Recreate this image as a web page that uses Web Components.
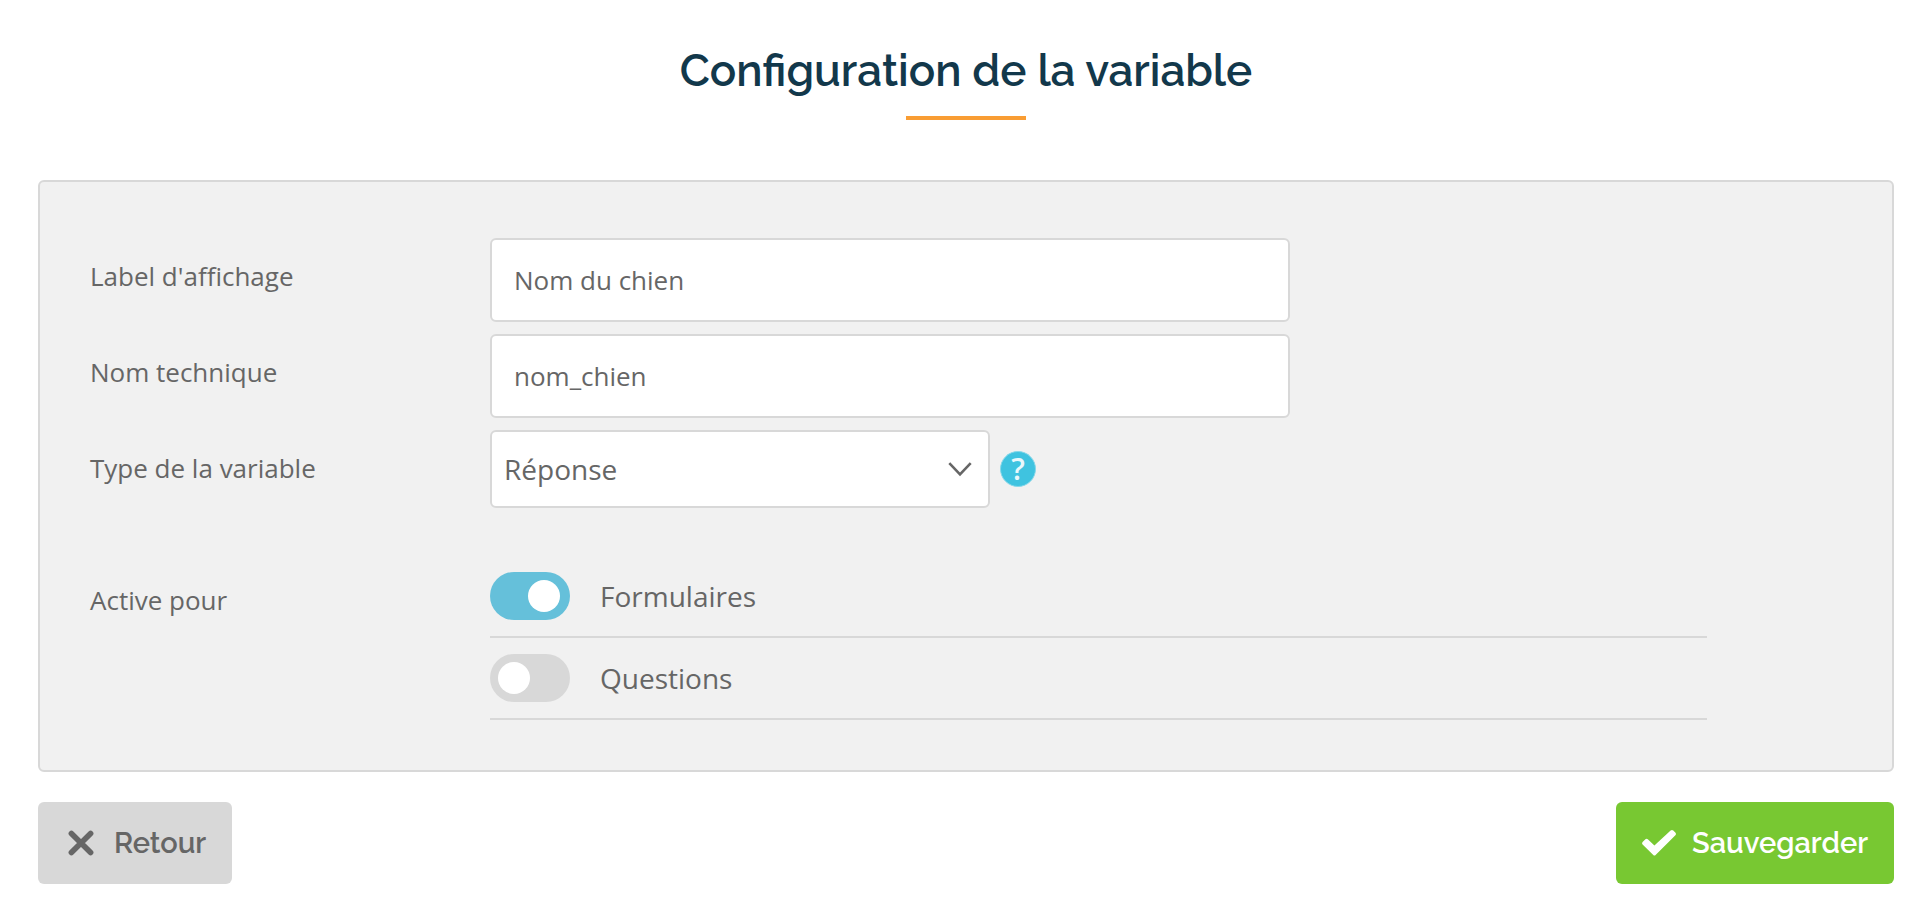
<!DOCTYPE html>
<html lang="fr">
<head>
<meta charset="utf-8">
<meta name="viewport" content="width=device-width, initial-scale=1">
<title>Configuration de la variable</title>
<style>
  body {
    --border: #d8d8d8;
    --text: #666;
    --heading-font: Raleway, Inter, "Open Sans", sans-serif;
    margin: 0;
    background: #fff;
    color: var(--text);
    font-family: "Open Sans", "Noto Sans", sans-serif;
    font-size: 26px;
  }
</style>
</head>
<body>
<variable-config></variable-config>

<script>
const fieldStyles = `
  :host { display: block; }
  .row { display: grid; grid-template-columns: 400px minmax(0, 1fr); align-items: start; }
  .label { line-height: 76px; }
`;

function define(name, html, setup) {
  const template = document.createElement('template');
  template.innerHTML = html;
  customElements.define(name, class extends HTMLElement {
    constructor() {
      super();
      this.attachShadow({ mode: 'open' }).append(template.content.cloneNode(true));
    }
    connectedCallback() {
      if (setup) setup(this, this.shadowRoot);
    }
  });
}

define('page-title', `
  <style>
    :host { display: block; text-align: center; }
    h1 { margin: 0; font: 600 44px/54px var(--heading-font); color: #12384b; }
    h1::after { content: ""; display: block; width: 120px; height: 4px; margin: 18px auto 0; background: #f99d33; }
  </style>
  <h1><slot></slot></h1>
`);

define('form-panel', `
  <style>
    :host { display: grid; gap: 12px; padding: 56px 50px 50px; background: #f1f1f1; border: 2px solid var(--border); border-radius: 6px; }
  </style>
  <slot></slot>
`);

define('text-field', `
  <style>
    ${fieldStyles}
    input { box-sizing: border-box; width: 100%; max-width: 800px; height: 84px; padding: 0 22px; border: 2px solid var(--border); border-radius: 6px; background: #fff; color: inherit; font: inherit; }
  </style>
  <div class="row">
    <label class="label" for="control"></label>
    <input id="control" type="text">
  </div>
`, (host, root) => {
  root.querySelector('label').textContent = host.getAttribute('label');
  root.querySelector('input').value = host.getAttribute('value');
});

define('help-button', `
  <style>
    :host { display: block; flex: none; }
    button { display: block; width: 36px; height: 36px; padding: 0; border: 1px solid #86d8ea; border-radius: 50%; background: #3fc3e0; color: #e9f8fc; font: 600 30px/32px "Open Sans", sans-serif; text-align: center; }
  </style>
  <button type="button" title="Aide">?</button>
`);

define('select-field', `
  <style>
    ${fieldStyles}
    .controls { display: flex; align-items: center; gap: 10px; }
    .select { display: grid; flex: 0 1 500px; align-items: center; }
    select, svg { grid-area: 1 / 1; }
    select { appearance: none; box-sizing: border-box; width: 100%; height: 78px; padding: 0 50px 0 12px; border: 2px solid var(--border); border-radius: 6px; background: #fff; color: inherit; font: inherit; font-size: 28px; }
    svg { justify-self: end; margin-right: 18px; pointer-events: none; }
  </style>
  <div class="row">
    <label class="label" for="control"></label>
    <div class="controls">
      <div class="select">
        <select id="control"></select>
        <svg width="24" height="16" viewBox="0 0 24 16" fill="none" stroke="#666" stroke-width="2.6" aria-hidden="true"><path d="M1.3 2.2 12 13.4 22.7 2.2"/></svg>
      </div>
      <help-button></help-button>
    </div>
  </div>
`, (host, root) => {
  root.querySelector('label').textContent = host.getAttribute('label');
  root.querySelector('select').replaceChildren(new Option(host.getAttribute('value')));
});

define('toggle-switch', `
  <style>
    :host { display: block; padding: 16px 0; border-bottom: 2px solid var(--border); }
    label { display: flex; align-items: center; gap: 30px; font-size: 28px; line-height: 48px; }
    input { appearance: none; flex: none; box-sizing: border-box; display: flex; width: 80px; height: 48px; margin: 0; padding: 8px; border-radius: 24px; background: #d8d8d8; }
    input::before { content: ""; width: 32px; height: 32px; border-radius: 50%; background: #fff; }
    input:checked { justify-content: flex-end; padding-right: 10px; background: #65c0da; }
  </style>
  <label><input type="checkbox" role="switch"><slot></slot></label>
`, (host, root) => {
  root.querySelector('input').checked = host.hasAttribute('checked');
});

define('toggle-group', `
  <style>
    ${fieldStyles}
    :host { margin-top: 36px; }
    .label { padding-top: 6px; }
    .list { max-width: 1217px; }
  </style>
  <div class="row" role="group" aria-labelledby="name">
    <div class="label" id="name"></div>
    <div class="list"><slot></slot></div>
  </div>
`, (host, root) => {
  root.querySelector('.label').textContent = host.getAttribute('label');
});

define('action-button', `
  <style>
    :host { display: block; --fill: #d8d8d8; --ink: #666; }
    :host([primary]) { --fill: #78c832; --ink: #fff; }
    button { display: flex; align-items: center; gap: 16px; height: 82px; padding: 0 26px; border: 0; border-radius: 6px; background: var(--fill); color: var(--ink); font: 600 29px/36px var(--heading-font); }
    ::slotted(svg) { display: block; }
  </style>
  <button type="button"><slot name="icon"></slot><slot></slot></button>
`);

define('variable-config', `
  <style>
    :host { display: block; padding: 44px 38px 38px; }
    form-panel { margin-top: 60px; }
    footer { display: flex; justify-content: space-between; margin-top: 30px; }
  </style>
  <main>
    <page-title>Configuration de la variable</page-title>
    <form-panel>
      <text-field label="Label d'affichage" value="Nom du chien"></text-field>
      <text-field label="Nom technique" value="nom_chien"></text-field>
      <select-field label="Type de la variable" value="Réponse"></select-field>
      <toggle-group label="Active pour">
        <toggle-switch checked>Formulaires</toggle-switch>
        <toggle-switch>Questions</toggle-switch>
      </toggle-group>
    </form-panel>
    <footer>
      <action-button><svg slot="icon" width="34" height="28" viewBox="0 0 34 28" fill="none" stroke="currentColor" stroke-width="5.6" stroke-linecap="round" aria-hidden="true"><path d="M7.4 4.4 26.6 23.6M26.6 4.4 7.4 23.6"/></svg>Retour</action-button>
      <action-button primary><svg slot="icon" width="34" height="28" viewBox="0 0 34 28" fill="currentColor" aria-hidden="true"><path d="M.6 13.1 3.4 10.3Q4.6 9.3 5.8 10.3L12.4 16.6 28.6 1.5Q30 .4 31.3 1.5L33.5 3.8Q34.4 5 33.4 6.2L13.6 26Q12.4 27 11.3 26L.6 15.6Q-.4 14.4.6 13.1Z"/></svg>Sauvegarder</action-button>
    </footer>
  </main>
`);
</script>
</body>
</html>
